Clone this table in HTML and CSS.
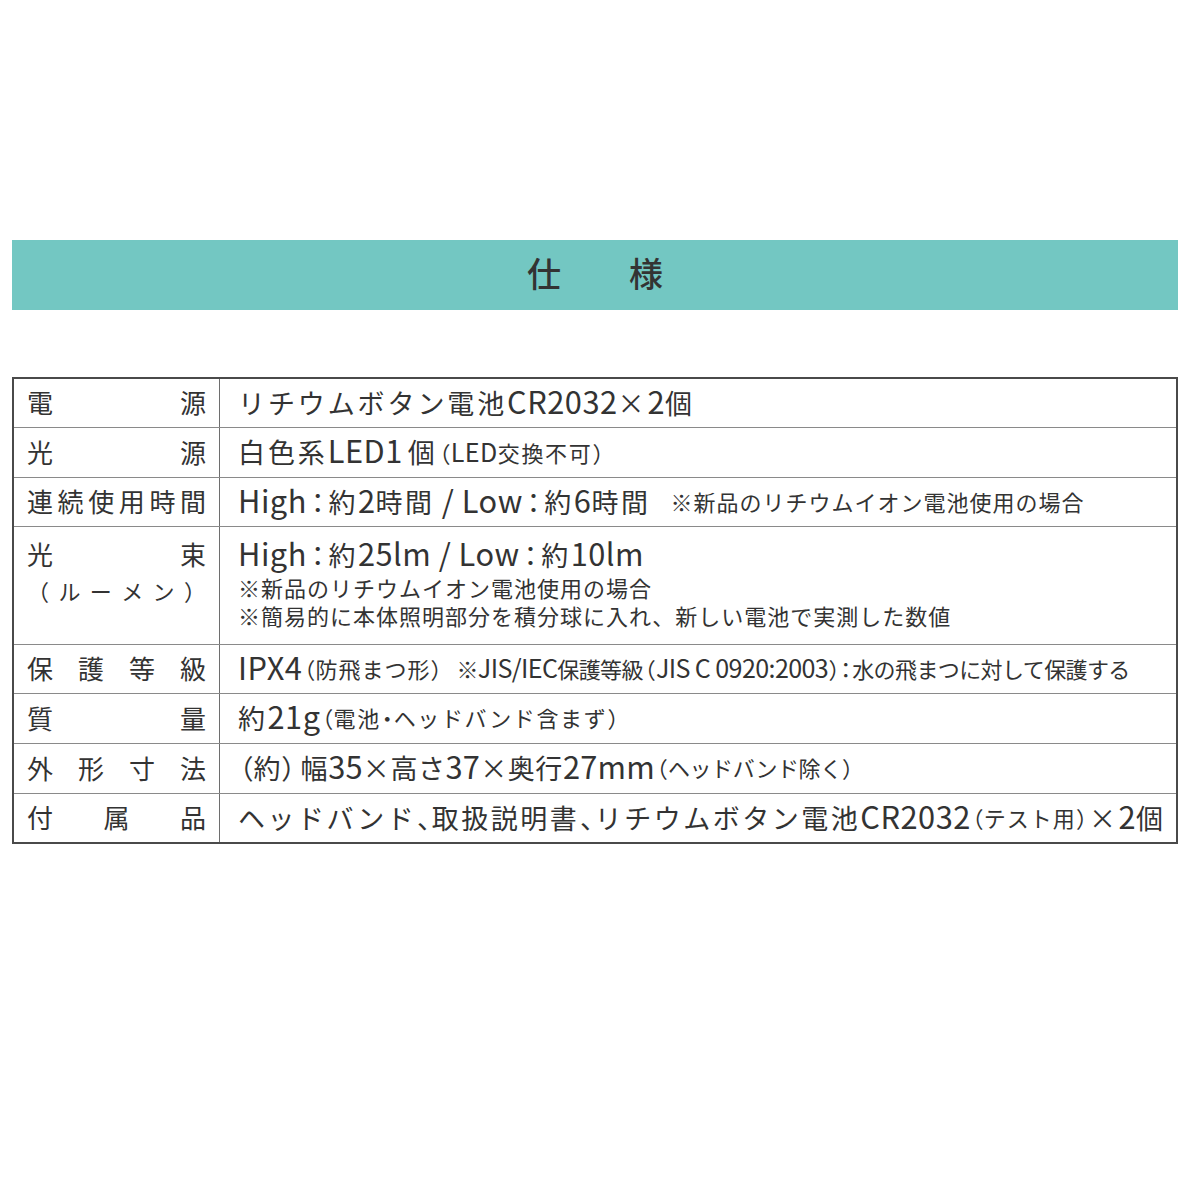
FILE: index.html
```html
<!DOCTYPE html>
<html lang="ja">
<head>
<meta charset="utf-8">
<link rel="stylesheet" href="styles.css">
</head>
<body>
<div class="page">
  <div class="title-bar"><h1 class="title">仕　　様</h1></div>
  <div class="spec">
    <div class="row r1">
      <div class="label"><span>電</span><span>源</span></div>
      <div class="val"><span class="big loose">リチウムボタン電池<span class="en">CR2032</span>×<span class="en">2</span>個</span></div>
    </div>
    <div class="row">
      <div class="label"><span>光</span><span>源</span></div>
      <div class="val"><span class="big loose">白色系<span class="en">LED1</span><span class="after-num">個</span></span><span class="small loose"><span class="pu">（</span><span class="en">LED</span>交換不可<span class="pu">）</span></span></div>
    </div>
    <div class="row short">
      <div class="label"><span>連</span><span>続</span><span>使</span><span>用</span><span>時</span><span>間</span></div>
      <div class="val"><span class="big"><span class="en">High</span><span class="pu colon">：</span>約<span class="en">2</span>時間<span class="en"> / Low</span><span class="pu colon">：</span>約<span class="en">6</span>時間</span><span class="small note">※新品のリチウムイオン電池使用の場合</span></div>
    </div>
    <div class="row tall">
      <div class="label stack">
        <div class="line"><span>光</span><span>束</span></div>
        <div class="line sub"><span>（</span><span>ル</span><span>ー</span><span>メ</span><span>ン</span><span>）</span></div>
      </div>
      <div class="val stack">
        <div class="big"><span class="en">High</span><span class="pu colon">：</span>約<span class="en">25lm / Low</span><span class="pu colon">：</span>約<span class="en">10lm</span></div>
        <div class="small first">※新品のリチウムイオン電池使用の場合</div>
        <div class="small">※簡易的に本体照明部分を積分球に入れ、新しい電池で実測した数値</div>
      </div>
    </div>
    <div class="row short">
      <div class="label"><span>保</span><span>護</span><span>等</span><span>級</span></div>
      <div class="val"><span class="big"><span class="en">IPX4</span></span><span class="small"><span class="pu">（</span>防飛まつ形<span class="pu">）</span></span><span class="small note wide">※<span class="en">JIS/IEC</span>保護等級<span class="pu">（</span><span class="en">JIS C 0920:2003</span><span class="pu">）：</span>水の飛まつに対して保護する</span></div>
    </div>
    <div class="row">
      <div class="label"><span>質</span><span>量</span></div>
      <div class="val"><span class="big">約<span class="en">21g</span></span><span class="small loose"><span class="pu">（</span>電池<span class="pu">・</span>ヘッドバンド含まず<span class="pu">）</span></span></div>
    </div>
    <div class="row">
      <div class="label"><span>外</span><span>形</span><span>寸</span><span>法</span></div>
      <div class="val"><span class="big tight"><span class="pu">（</span>約<span class="pu gap">）</span>幅<span class="en">35</span>×高さ<span class="en">37</span>×奥行<span class="en">27mm</span></span><span class="small tight"><span class="pu">（</span>ヘッドバンド除く<span class="pu">）</span></span></div>
    </div>
    <div class="row short">
      <div class="label"><span>付</span><span>属</span><span>品</span></div>
      <div class="val"><span class="big">ヘッドバンド<span class="pu">、</span>取扱説明書<span class="pu">、</span>リチウムボタン電池<span class="en">CR2032</span></span><span class="small"><span class="pu">（</span>テスト用<span class="pu">）</span></span><span class="big">×<span class="en">2</span>個</span></div>
    </div>
  </div>
</div>
</body>
</html>
```

FILE: styles.css
```css
html, body {
  margin: 0;
  padding: 0;
  background: #ffffff;
}
body {
  font-family: "Noto Sans CJK JP", "Noto Sans", sans-serif;
  color: #333333;
  width: 1200px;
  height: 1200px;
}
.page {
  padding: 240px 22px 0 12px;
}
.title-bar {
  background: #73c7c2;
  height: 70px;
  box-sizing: border-box;
  padding-bottom: 5px;
  display: flex;
  align-items: center;
  justify-content: center;
}
.title {
  margin: 0;
  font-size: 34px;
  font-weight: 500;
  color: #333;
  line-height: 1;
}
.spec {
  margin-top: 67px;
  border: 2px solid #4a4a4a;
}
.row {
  display: flex;
  height: 49px;
  border-top: 1px solid #8a8a8a;
}
.row.r1 {
  border-top: 0;
  height: 48px;
}
.row.short {
  height: 48px;
}
.row.tall {
  height: 117px;
}
.label {
  width: 206px;
  flex: none;
  box-sizing: border-box;
  padding: 0 13px 2px 13px;
  border-right: 1px solid #6e6e6e;
  display: flex;
  justify-content: space-between;
  align-items: center;
  font-size: 26px;
  line-height: 1;
}
.val {
  flex: 1;
  display: flex;
  align-items: center;
  padding-left: 18px;
  padding-bottom: 3px;
  white-space: nowrap;
  overflow: hidden;
}
.big {
  font-size: 27px;
  letter-spacing: 2.5px;
  line-height: 34px;
}
.big.loose {
  letter-spacing: 2.9px;
}
.after-num {
  margin-left: 5px;
}
.small {
  font-size: 22px;
  letter-spacing: 1px;
  line-height: 28px;
}
.small.loose {
  letter-spacing: 1.6px;
}
.en {
  font-size: 1.14em;
  letter-spacing: 0.5px;
}
.pu {
  font-feature-settings: "palt";
  letter-spacing: 0;
  margin: 0 1px;
}
.pu.colon {
  margin: 0 4px;
}
.pu.gap {
  margin-right: 5px;
}
.big.tight {
  letter-spacing: 0.6px;
}
.big.tight .en {
  letter-spacing: 0.2px;
}
.small.tight {
  letter-spacing: -0.4px;
}
.note {
  margin-left: 20px;
}
.note.wide {
  margin-left: 13px;
  letter-spacing: -0.6px;
}
.note.wide .en {
  letter-spacing: -0.6px;
}
.label.stack {
  flex-direction: column;
  align-items: stretch;
  justify-content: flex-start;
  padding-top: 10px;
  padding-bottom: 0;
  gap: 5px;
}
.label .line {
  display: flex;
  justify-content: space-between;
  line-height: 34px;
}
.label .line.sub {
  font-size: 22px;
  line-height: 28px;
}
.val.stack {
  flex-direction: column;
  align-items: flex-start;
  justify-content: flex-start;
  padding-top: 9px;
  padding-bottom: 0;
}
.val.stack .first {
  margin-top: 1px;
}
```
